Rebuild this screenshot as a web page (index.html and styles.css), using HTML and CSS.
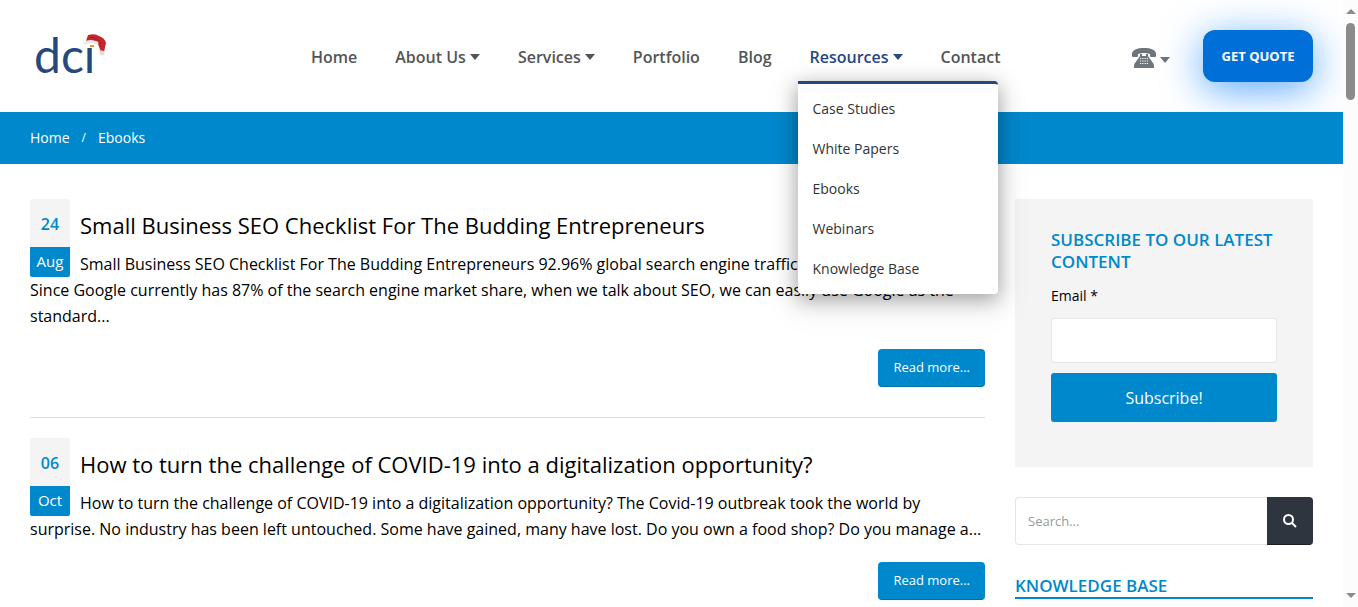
FILE: index.html
```
<!DOCTYPE html>
<html lang="en">
<head>
<meta charset="utf-8">
<title>Ebooks</title>
<link rel="stylesheet" href="styles.css">
</head>
<body>
<div class="page">
  <header class="header">
    <a class="logo" href="#" aria-label="dci home">
      <svg width="80" height="72" viewBox="0 -12 80 72">
        <text class="logo-text" x="4" y="41">dcı</text>
        <rect x="60" y="13" width="4" height="2" fill="#f39a1e"/>
        <path d="M56 9L58 3Q65 1 69 4Q75 6 76 11L74 20H71L68 12Q62 8 56 9Z" fill="#c4262e"/>
        <path d="M60 5Q67 6 71 12" fill="none" stroke="#9d1c24" stroke-width="1"/>
        <path d="M55 11Q60 8 67 11" fill="none" stroke="#eee9e4" stroke-width="3" stroke-linecap="round"/>
        <circle cx="72" cy="21" r="2.500" fill="#e3ddd8"/>
      </svg>
    </a>
    <nav class="nav" aria-label="Main">
      <ul class="nav-list">
        <li><a href="#">Home</a></li>
        <li><a href="#">About Us<span class="caret"></span></a></li>
        <li><a href="#">Services<span class="caret"></span></a></li>
        <li><a href="#">Portfolio</a></li>
        <li><a href="#">Blog</a></li>
        <li class="has-menu"><a class="active" href="#">Resources<span class="caret"></span></a>
          <ul class="menu">
            <li><a href="#">Case Studies</a></li>
            <li><a href="#">White Papers</a></li>
            <li><a href="#">Ebooks</a></li>
            <li><a href="#">Webinars</a></li>
            <li><a href="#">Knowledge Base</a></li>
          </ul>
        </li>
        <li><a href="#">Contact</a></li>
      </ul>
    </nav>
    <div class="actions">
      <button class="phone" type="button" aria-label="Phone numbers">
        <svg width="24" height="20" viewBox="0 0 24 20">
          <path d="M0 8V5C1 2 5 0 12 0S23 2 24 5V8Q24 9 23 9H19Q18 9 18 8V6Q12 4 6 6V8Q6 9 5 9H1Q0 9 0 8Z" fill="#6f757c"/>
          <path d="M8 6H10V8H14V6H16V8L21 15Q22 16 22 18V20H2V18Q2 16 3 15L8 8Z" fill="#6f757c"/>
          <path d="M8 10.500H16M8 13H16M8 15.500H16" stroke="#fff" stroke-width="1.200" stroke-dasharray="1.200 1.067"/>
        </svg>
        <span class="caret"></span>
      </button>
      <a class="quote" href="#">GET QUOTE</a>
    </div>
  </header>

  <nav class="crumbs" aria-label="Breadcrumb">
    <a href="#">Home</a><span class="slash">/</span><a href="#">Ebooks</a>
  </nav>

  <div class="content">
    <main>
      <article class="post">
        <div class="date"><span class="day">24</span><span class="month">Aug</span></div>
        <h2><a href="#">Small Business SEO Checklist For The Budding Entrepreneurs</a></h2>
        <p>Small Business SEO Checklist For The Budding Entrepreneurs 92.96% global search engine traffic<br>Since Google currently has 87% of the search engine market share, when we talk about SEO, we can easily use Google as the<br>standard...</p>
        <div class="more"><a href="#">Read more...</a></div>
      </article>
      <article class="post">
        <div class="date"><span class="day">06</span><span class="month">Oct</span></div>
        <h2><a href="#">How to turn the challenge of COVID-19 into a digitalization opportunity?</a></h2>
        <p>How to turn the challenge of COVID-19 into a digitalization opportunity? The Covid-19 outbreak took the world by<br>surprise. No industry has been left untouched. Some have gained, many have lost. Do you own a food shop? Do you manage a...</p>
        <div class="more"><a href="#">Read more...</a></div>
      </article>
    </main>
    <aside>
      <form class="subscribe">
        <h3>Subscribe to our latest content</h3>
        <label for="email">Email *</label>
        <input id="email" type="email">
        <button type="button">Subscribe!</button>
      </form>
      <form class="search">
        <input type="search" placeholder="Search..." aria-label="Search">
        <button type="button" aria-label="Search">
          <svg width="14" height="14" viewBox="0 0 14 14" fill="none" stroke="#fff" stroke-width="2"><circle cx="5.500" cy="5.500" r="4.500"/><path d="M9 9L13 13"/></svg>
        </button>
      </form>
      <h3 class="section-title">Knowledge Base</h3>
    </aside>
  </div>
</div>
<div class="scrollbar" aria-hidden="true">
  <span class="arrow up"></span>
  <span class="thumb"></span>
  <span class="arrow down"></span>
</div>
</body>
</html>
```
FILE: styles.css
```
* { box-sizing: border-box; }
body {
  margin: 0;
  display: flex;
  min-height: 100vh;
  background: #fff;
  color: #000;
  font: 16px/26px "Open Sans", "Noto Sans", sans-serif;
}
a { color: inherit; text-decoration: none; }
ul { list-style: none; margin: 0; padding: 0; }
h2, h3, p { margin: 0; }
input, button { font-family: inherit; }
.page { flex: 1; min-width: 0; }

.header { display: flex; align-items: center; height: 112px; padding: 0 30px; }
.logo { flex: 0 0 281px; height: 72px; }
.logo svg { display: block; }
.logo-text { font-family: Lato, sans-serif; font-size: 48px; fill: #27487f; }
.nav-list { display: flex; gap: 38px; padding-top: 2px; }
.nav a { display: flex; align-items: center; color: #555; font-weight: 600; white-space: nowrap; }
.nav a.active { color: #27487f; }
.caret {
  display: inline-block;
  margin-left: 4px;
  border: 5px solid transparent;
  border-top: 6px solid currentColor;
  border-bottom: 0;
}
.has-menu { position: relative; }
.menu {
  position: absolute;
  z-index: 5;
  top: 37px;
  left: -12px;
  width: 200px;
  padding: 5px 0;
  background: #fff;
  border-top: 3px solid #27487f;
  border-radius: 0 4px 4px 4px;
  box-shadow: 0 10px 30px 10px rgba(0, 0, 0, .05), 0 5px 20px rgba(0, 0, 0, .35);
}
.menu a { padding: 7px 15px; color: #333; font-size: 14px; font-weight: 400; }
.actions { display: flex; align-items: center; margin-left: auto; gap: 33px; }
.phone { display: flex; align-items: center; padding: 4px 0 0; border: 0; background: none; color: #6f757c; }
.phone .caret { margin-top: 4px; }
.quote {
  width: 110px;
  line-height: 52px;
  border-radius: 12px;
  background: #0070d8;
  color: #fff;
  font-size: 13px;
  font-weight: 700;
  text-align: center;
  box-shadow: 0 8px 40px rgba(0, 123, 255, .65);
}

.crumbs { position: relative; display: flex; padding: 13px 30px; background: #0088cc; color: #fff; font-size: 14px; }
.has-menu { z-index: 5; }
.slash { margin: 0 12px; font-size: 12px; }

.content { display: grid; grid-template-columns: minmax(0, 1fr) 298px; gap: 30px; padding: 35px 30px 0; }
.post { margin-bottom: 20px; padding-bottom: 30px; border-bottom: 1px solid #ddd; }
.post:last-child { margin: 0; padding: 0; border: 0; }
.date { float: left; width: 40px; margin-right: 10px; text-align: center; }
.day, .month { display: block; }
.day { height: 48px; line-height: 50px; border-radius: 2px 2px 0 0; background: #f4f4f4; color: #0088cc; font-weight: 600; }
.month { height: 30px; line-height: 28px; border-radius: 0 0 2px 2px; background: #0088cc; color: #fff; font-size: 15px; }
.post h2 { padding: 13px 0; font-size: 22px; line-height: 26px; font-weight: 400; }
.post p { white-space: nowrap; }
.more { display: flex; justify-content: flex-end; margin-top: 20px; }
.more a {
  padding: 3px 15px;
  border-radius: 4px;
  border-bottom: 1px solid #006fa6;
  background: #0088cc;
  color: #fff;
  font-size: 13px;
  line-height: 31px;
}
h3 { color: #0088cc; font-size: 17px; line-height: 22px; font-weight: 600; text-transform: uppercase; }
.subscribe { padding: 30px 36px 45px; background: #f4f4f4; }
.subscribe label { display: block; margin: 10px 0 9px; font-size: 14px; }
.subscribe input { display: block; width: 100%; height: 45px; border: 1px solid #e5e5e5; border-radius: 3px; background: #fff; }
.subscribe button { width: 100%; height: 49px; margin-top: 10px; border: 0; border-radius: 3px; background: #0088cc; color: #fff; font-size: 16px; }
.search { display: flex; height: 48px; margin-top: 30px; }
.search input { flex: 1; min-width: 0; padding: 0 12px; border: 1px solid #e5e5e5; border-right: 0; border-radius: 4px 0 0 4px; font-size: 13px; }
.search input::placeholder { color: #999; }
.search button { display: grid; place-items: center; width: 46px; border: 0; border-bottom: 1px solid #1c2026; border-radius: 0 4px 4px 0; background: #2e353e; }
.section-title { margin-top: 30px; border-bottom: 2px solid #0088cc; }

.scrollbar { display: flex; flex-direction: column; align-items: center; width: 15px; padding: 9px 0; background: #fcfcfc; }
.arrow { border: 5px solid transparent; }
.up { border-top: 0; border-bottom-color: #8b8b8b; }
.down { margin-top: auto; border-bottom: 0; border-top-color: #8b8b8b; }
.thumb { width: 9px; height: 77px; margin-top: 9px; border-radius: 5px; background: #8b8b8b; }
```
